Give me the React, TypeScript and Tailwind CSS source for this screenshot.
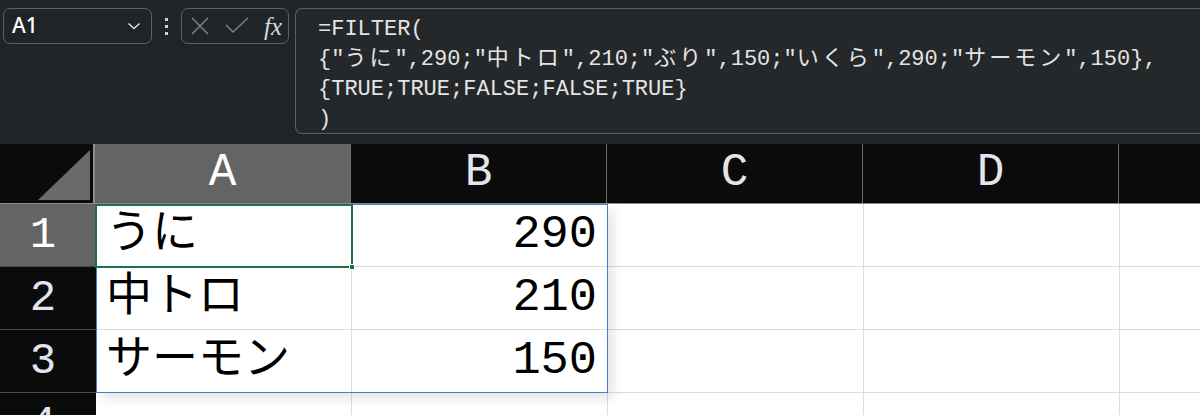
import React from "react";

const mono = "font-['Liberation_Mono','Noto_Sans_CJK_JP',monospace]";

const cols = ["A", "B", "C", "D", "E"];

const rows: { n: number; a: string; b: string }[] = [
  { n: 1, a: "うに", b: "290" },
  { n: 2, a: "中トロ", b: "210" },
  { n: 3, a: "サーモン", b: "150" },
  { n: 4, a: "", b: "" },
];

// CJK runs in the formula are a bit wider than the latin half-width chars
const J = ({ children }: { children: React.ReactNode }) => (
  <span className="tracking-[3px]">{children}</span>
);

const FormulaBar = () => (
  <div className="flex h-[144px] items-start bg-[#212427] pt-[8px]">
    <div className="ml-[3px] flex h-[36px] w-[149px] items-center justify-between rounded-[7px] border border-[#5c6065] bg-[#212427] pl-[8px] pr-[10px]">
      <span className="font-['Noto_Sans',sans-serif] text-[21px] font-medium text-white">A1</span>
      <svg width="14" height="10" viewBox="0 0 14 10" fill="none">
        <path d="M1.5 2.5 L7 7.5 L12.5 2.5" stroke="#d8d8d8" strokeWidth="1.6" />
      </svg>
    </div>
    <div className="flex h-[36px] w-[29px] flex-col items-center justify-center gap-[4px]">
      <span className="h-[3px] w-[3px] bg-[#d0d0d0]" />
      <span className="h-[3px] w-[3px] bg-[#d0d0d0]" />
      <span className="h-[3px] w-[3px] bg-[#d0d0d0]" />
    </div>
    <div className="flex h-[36px] w-[108px] items-center justify-between rounded-[7px] border border-[#5c6065] pl-[8px] pr-[6px]">
      <svg width="20" height="20" viewBox="0 0 20 20" fill="none">
        <path d="M2 2 L18 18 M18 2 L2 18" stroke="#7b7e82" strokeWidth="1.6" />
      </svg>
      <svg width="24" height="18" viewBox="0 0 24 18" fill="none">
        <path d="M1 8 L8 15 L23 1" stroke="#7b7e82" strokeWidth="1.6" />
      </svg>
      <span className="font-['Liberation_Serif',serif] text-[25px] italic leading-none text-[#d8d8d8]">fx</span>
    </div>
    <div className="ml-[6px] flex h-[126px] flex-1 flex-col rounded-l-[7px] border border-r-0 border-[#5c6065] bg-[#25282b] pl-[22px] pt-[6px]">
      <div className={`${mono} whitespace-nowrap text-[22px] leading-[30px] text-[#e4e4e4]`}>
        <div>=FILTER(</div>
        <div>
          {'{"'}<J>うに</J>{'",290;"'}<J>中トロ</J>{'",210;"'}<J>ぶり</J>{'",150;"'}<J>いくら</J>{'",290;"'}<J>サーモン</J>{'",150},'}
        </div>
        <div>{"{TRUE;TRUE;FALSE;FALSE;TRUE}"}</div>
        <div>)</div>
      </div>
    </div>
  </div>
);

const HeaderRow = () => (
  <div className="flex h-[60px] border-b border-[#8c8c8c]">
    <div className="flex w-[95px] items-end justify-end border-r-2 border-[#8c8c8c] bg-[#0b0b0b] pb-[3px] pr-[3px]">
      <svg width="52" height="50" viewBox="0 0 52 50">
        <polygon points="52,0 52,50 0,50" fill="#6a6a6a" />
      </svg>
    </div>
    {cols.map((c, i) => (
      <div
        key={c}
        className={`${mono} flex ${i === 4 ? "flex-1" : "w-[256px] border-r border-[#6e6e6e]"} items-center justify-center text-[46px] ${
          i === 0 ? "bg-[#646464] text-white" : "bg-[#0b0b0b] text-[#e2e6ea]"
        }`}
      >
        {i === 4 ? "" : c}
      </div>
    ))}
  </div>
);

export default function App() {
  return (
    <div className="h-[415px] w-[1200px] overflow-hidden bg-white">
      <FormulaBar />
      <HeaderRow />
      <div className="relative">
        {rows.map((r) => (
          <div key={r.n} className="flex h-[63px]">
            <div
              className={`${mono} flex w-[96px] items-center justify-center border-b border-[#4a4a4a] pr-[10px] text-[44px] ${
                r.n === 1 ? "bg-[#646464] text-white" : "bg-[#0b0b0b] text-[#e2e6ea]"
              }`}
            >
              {r.n}
            </div>
            <div className={`${mono} flex w-[256px] items-center border-b border-r border-[#dcdcdc] pl-[10px] text-[46px] text-black`}>
              {r.a}
            </div>
            <div className={`${mono} flex w-[256px] items-center justify-end border-b border-r border-[#dcdcdc] pr-[10px] text-[47px] text-black`}>
              {r.b}
            </div>
            <div className="w-[256px] border-b border-r border-[#dcdcdc]" />
            <div className="w-[256px] border-b border-r border-[#dcdcdc]" />
            <div className="flex-1 border-b border-[#dcdcdc]" />
          </div>
        ))}
        {/* spill range */}
        <div className="pointer-events-none absolute left-[96px] top-0 h-[189px] w-[512px] border border-[#4a7bd0] shadow-[6px_6px_10px_rgba(0,0,0,0.10)]" />
        {/* active cell */}
        <div className="pointer-events-none absolute left-[95px] top-0 h-[64px] w-[258px] border-2 border-[#1e7145]">
          <div className="absolute -bottom-[4px] -right-[4px] h-[6px] w-[6px] border border-white bg-[#1e7145]" />
        </div>
      </div>
    </div>
  );
}
